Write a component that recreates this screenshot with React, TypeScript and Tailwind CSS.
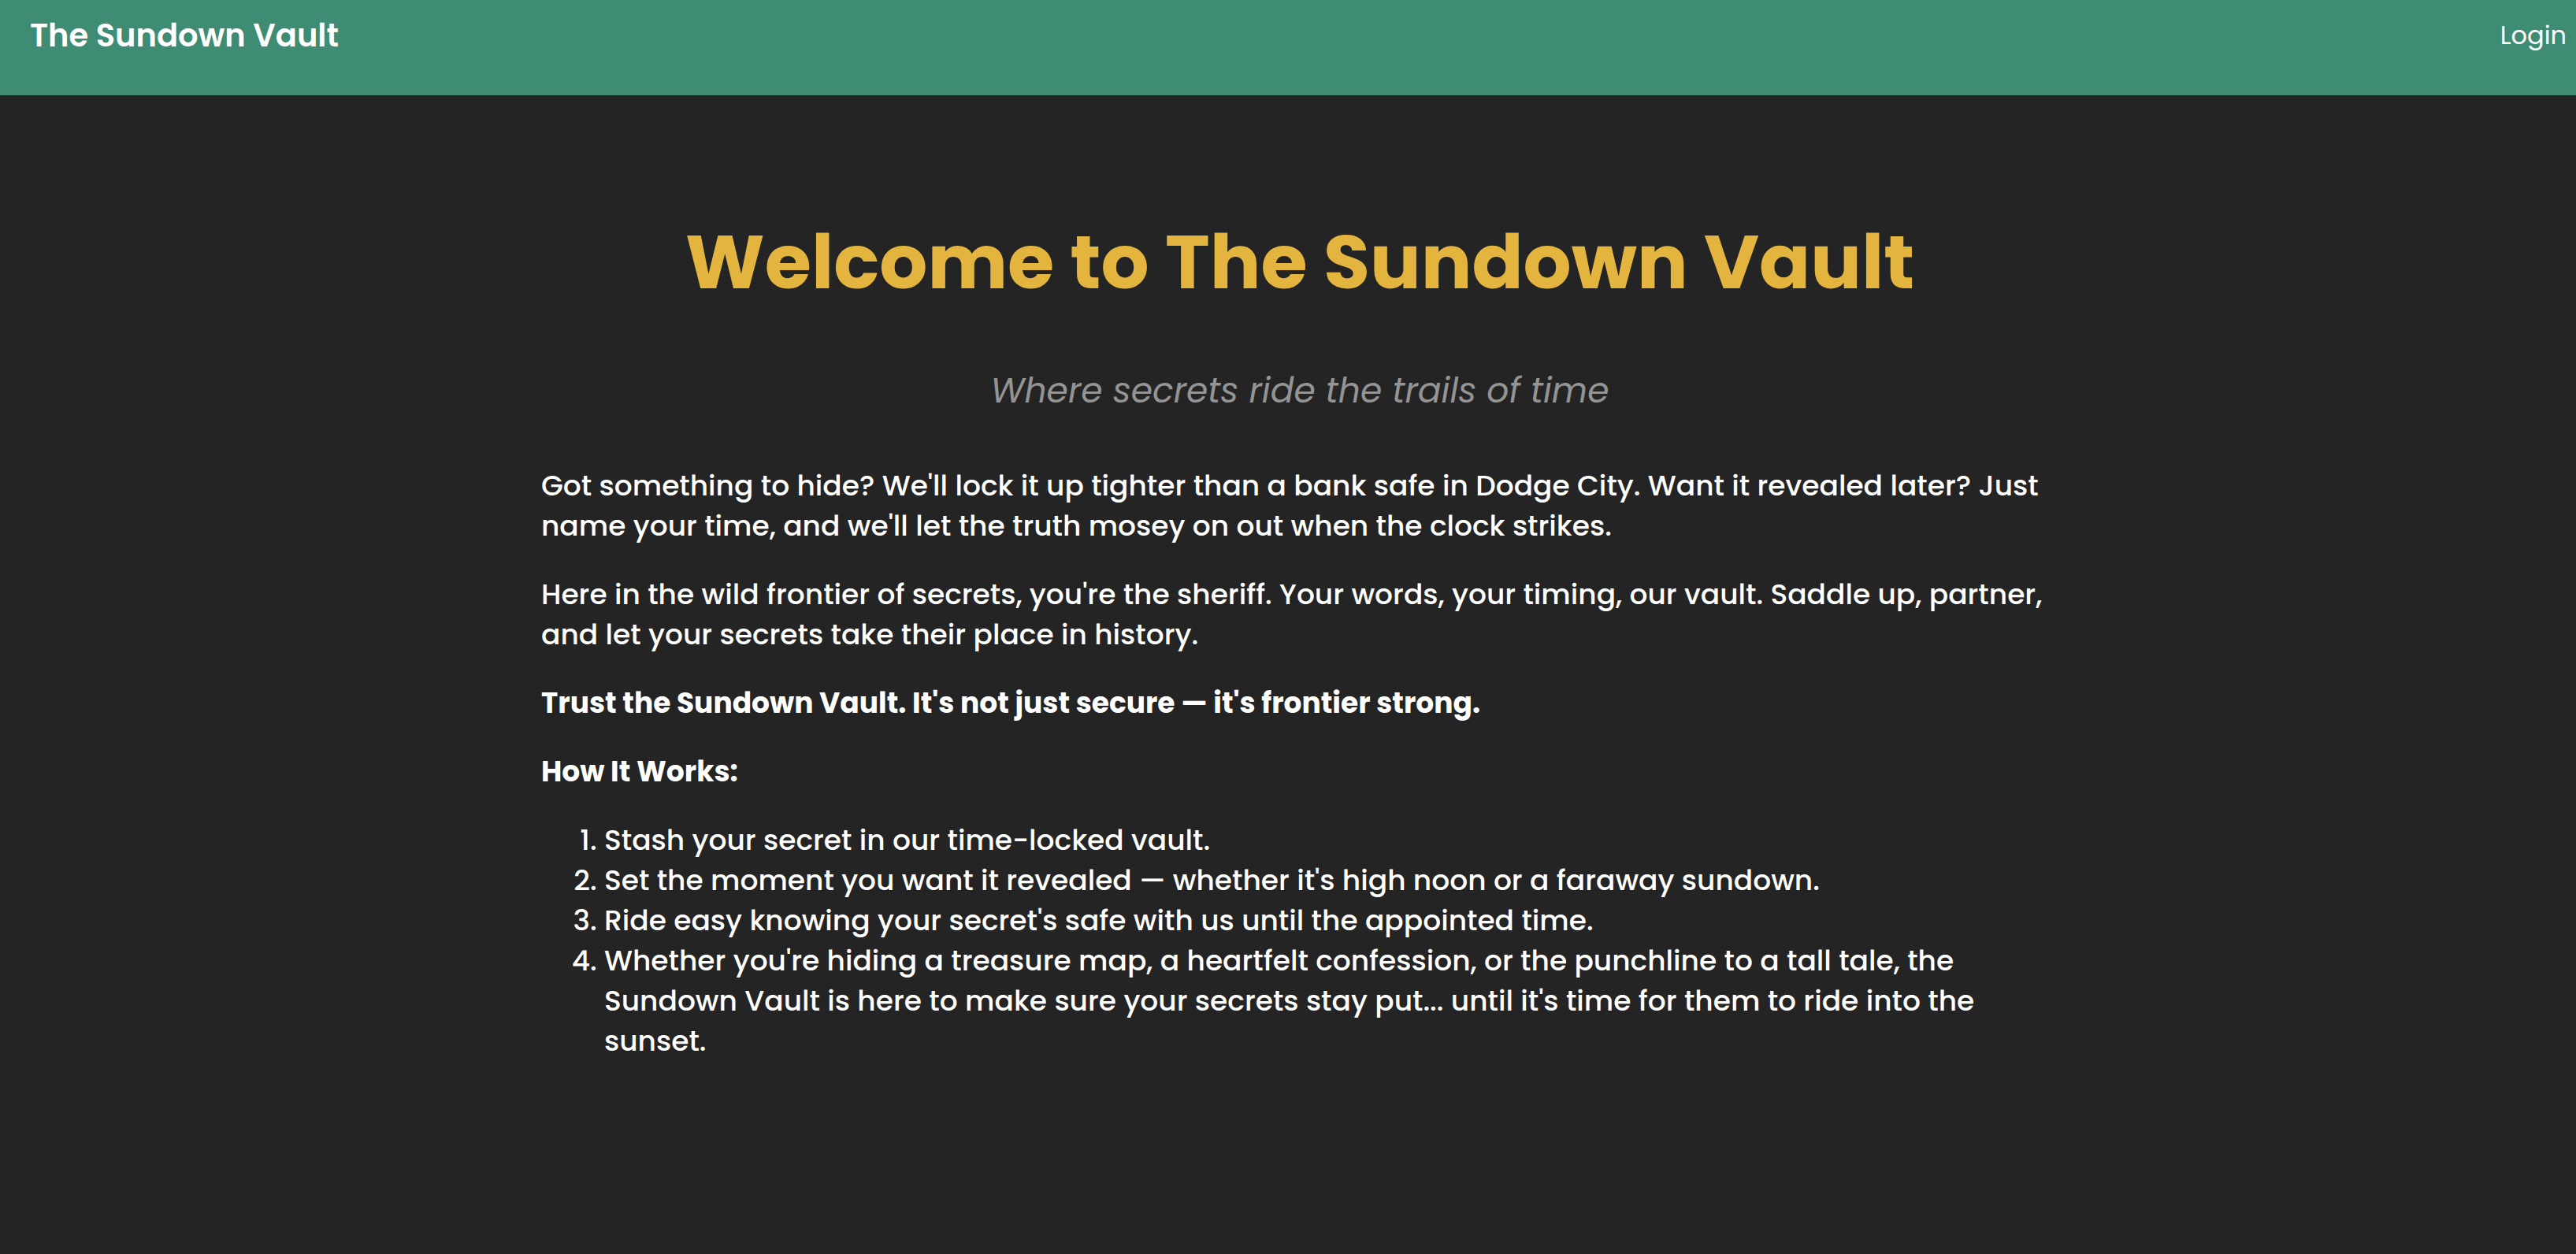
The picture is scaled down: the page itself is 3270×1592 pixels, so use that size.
const steps = [
  "Stash your secret in our time-locked vault.",
  "Set the moment you want it revealed — whether it's high noon or a faraway sundown.",
  "Ride easy knowing your secret's safe with us until the appointed time.",
  "Whether you're hiding a treasure map, a heartfelt confession, or the punchline to a tall tale, the Sundown Vault is here to make sure your secrets stay put... until it's time for them to ride into the sunset.",
];

function Header() {
  return (
    <header className="flex h-[121px] items-start justify-between bg-[#3e8c73] pt-4 pr-3 pl-[38px] text-white">
      <a href="#home" className="text-[40px] leading-[58px] font-semibold">
        The Sundown Vault
      </a>
      <nav>
        <a href="#login" className="text-[32px] leading-[58px]">
          Login
        </a>
      </nav>
    </header>
  );
}

export default function App() {
  return (
    <div className="min-h-screen bg-[#242424] font-['Poppins','Inter',sans-serif] text-white">
      <Header />
      <main className="mx-auto max-w-[1956px] pt-[140px] pb-16 pl-[30px] text-[36px] leading-[51px] font-medium">
        <h1 className="text-center text-[96px] leading-[144px] font-bold text-[#e4b53e]">
          Welcome to The Sundown Vault
        </h1>
        <p className="mt-[56px] text-center text-[44px] leading-[70px] font-normal text-[#949494] italic">
          Where secrets ride the trails of time
        </p>
        <div className="mt-[60px] flex flex-col gap-9">
          <p>
            Got something to hide? We'll lock it up tighter than a bank safe in Dodge City. Want it revealed later? Just
            name your time, and we'll let the truth mosey on out when the clock strikes.
          </p>
          <p>
            Here in the wild frontier of secrets, you're the sheriff. Your words, your timing, our vault. Saddle up,
            partner, and let your secrets take their place in history.
          </p>
          <p className="font-bold">Trust the Sundown Vault. It's not just secure — it's frontier strong.</p>
          <h2 className="font-bold">How It Works:</h2>
          <ol className="list-decimal pl-20">
            {steps.map((step) => (
              <li key={step}>{step}</li>
            ))}
          </ol>
        </div>
      </main>
    </div>
  );
}
